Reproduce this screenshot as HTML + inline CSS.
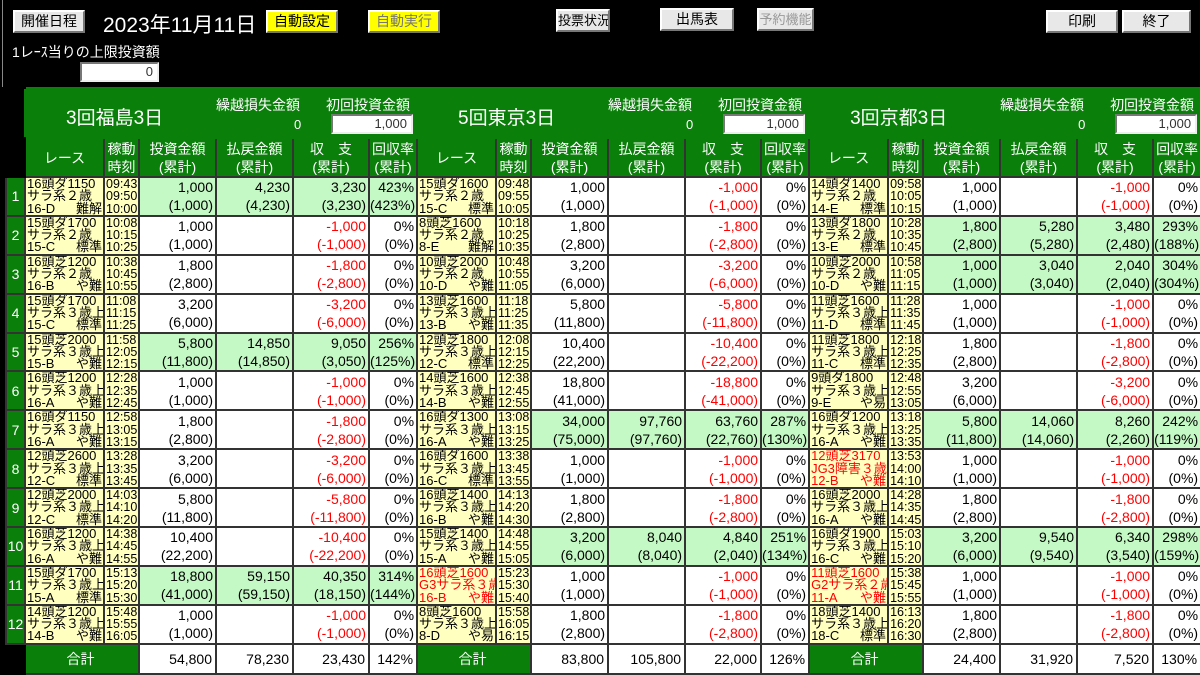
<!DOCTYPE html>
<html><head><meta charset="utf-8"><style>
*{margin:0;padding:0;box-sizing:border-box}
body{width:1200px;height:672px;background:#000;overflow:hidden;position:relative;font-family:"Liberation Sans","Noto Sans CJK JP","IPAGothic",sans-serif;color:#000}
.btn{position:absolute;background:#e8e8e8;border:2px solid;border-color:#fff #777 #777 #fff;font-size:14px;text-align:center;line-height:19px;height:23px;white-space:nowrap;overflow:hidden}
.yb{background:#ffff00}
.lbl{position:absolute;color:#fff}
.inp{position:absolute;background:#fff;border:2px solid;border-color:#777 #eee #eee #777;text-align:right;font-size:13px;padding-right:4px;line-height:16px;color:#333}
table{position:absolute;left:5px;top:87px;border-collapse:collapse;table-layout:fixed;width:1195px}
td{border:2px solid #333;overflow:hidden;white-space:nowrap}
.hd td{background:#0a7f0a;color:#fff;border-color:#0a7f0a;height:50px;position:relative;vertical-align:top;border-right:1px solid #6a6a6a}
.ch td{background:#0a7f0a;color:#fff;height:39px;font-size:14px;line-height:18px;text-align:center;border-color:#333}
.ch td.z,.hd td.z{background:#000;border-color:#000}
td.n{background:#0a7f0a;color:#fff;text-align:center;font-size:14px}
td.r,td.t{background:#ffffc0;font-size:13px;line-height:12.3px;padding:0 1px;vertical-align:middle}
td.t{padding:0 1px;font-size:12.5px}
td.r span{float:right}
.rd{color:#f00}
td.v{background:#fff;text-align:right;font-size:14px;line-height:18px;padding-right:2px;height:38.8px}
td.w{background:#c4f8c4}
td.m{color:#f00}
.tot td{height:30px;font-size:14px;background:#fff;text-align:right;padding-right:3px}
.tot td.z{background:#000;border-color:#000}
.tot td.s{background:#0a7f0a;color:#fff;text-align:center}
.vn{position:absolute;left:40px;top:14px;font-size:19px}
.kl{position:absolute;left:190px;top:6px;font-size:14px}
.k0{position:absolute;left:268px;top:28px;font-size:13px}
.sl{position:absolute;left:300px;top:6px;font-size:14px}
.si{position:absolute;left:305px;top:25px;width:82px;height:20px;background:#fff;border:2px solid;border-color:#777 #eee #eee #777;color:#333;text-align:right;font-size:13px;padding-right:4px;line-height:16px}
</style></head><body>
<div style="position:absolute;left:2px;top:0;width:1px;height:87px;background:#888"></div>
<div class="btn" style="left:13px;top:10px;width:72px">開催日程</div>
<div class="lbl" style="left:103px;top:9px;font-size:21px">2023年11月11日</div>
<div class="btn yb" style="left:266px;top:10px;width:72px">自動設定</div>
<div class="btn yb" style="left:368px;top:10px;width:72px;color:#777">自動実行</div>
<div class="btn" style="left:556px;top:9px;width:54px;font-size:13px">投票状況</div>
<div class="btn" style="left:660px;top:8px;width:74px">出馬表</div>
<div class="btn" style="left:757px;top:8px;width:57px;color:#999;font-size:13px">予約機能</div>
<div class="btn" style="left:1046px;top:10px;width:72px">印刷</div>
<div class="btn" style="left:1122px;top:10px;width:69px">終了</div>
<div class="lbl" style="left:12px;top:42px;font-size:14px">1レｰｽ当りの上限投資額</div>
<div class="inp" style="left:80px;top:62px;width:79px;height:20px">0</div>
<table>
<colgroup><col style="width:19px"><col style="width:79px"><col style="width:35px"><col style="width:77px"><col style="width:77px"><col style="width:76px"><col style="width:48px"><col style="width:79px"><col style="width:35px"><col style="width:77px"><col style="width:77px"><col style="width:76px"><col style="width:48px"><col style="width:79px"><col style="width:35px"><col style="width:77px"><col style="width:77px"><col style="width:76px"><col style="width:48px"></colgroup>
<tr class="hd"><td class="z"></td>
<td colspan="6"><div class="vn">3回福島3日</div><div class="kl">繰越損失金額</div><div class="k0">0</div><div class="sl">初回投資金額</div><div class="si">1,000</div></td>
<td colspan="6"><div class="vn">5回東京3日</div><div class="kl">繰越損失金額</div><div class="k0">0</div><div class="sl">初回投資金額</div><div class="si">1,000</div></td>
<td colspan="6"><div class="vn">3回京都3日</div><div class="kl">繰越損失金額</div><div class="k0">0</div><div class="sl">初回投資金額</div><div class="si">1,000</div></td></tr>
<tr class="ch"><td class="z"></td>
<td>レース</td><td>稼動<br>時刻</td><td>投資金額<br>(累計)</td><td>払戻金額<br>(累計)</td><td>収　支<br>(累計)</td><td>回収率<br>(累計)</td>
<td>レース</td><td>稼動<br>時刻</td><td>投資金額<br>(累計)</td><td>払戻金額<br>(累計)</td><td>収　支<br>(累計)</td><td>回収率<br>(累計)</td>
<td>レース</td><td>稼動<br>時刻</td><td>投資金額<br>(累計)</td><td>払戻金額<br>(累計)</td><td>収　支<br>(累計)</td><td>回収率<br>(累計)</td></tr>

<tr><td class="n">1</td>
<td class="r">16頭ダ1150<br>サラ系２歳<br>16-D<span>難解</span></td><td class="t">09:43<br>09:50<br>10:00</td><td class="v w">1,000<br>(1,000)</td><td class="v w">4,230<br>(4,230)</td><td class="v w">3,230<br>(3,230)</td><td class="v w">423%<br>(423%)</td>
<td class="r">15頭ダ1600<br>サラ系２歳<br>15-C<span>標準</span></td><td class="t">09:48<br>09:55<br>10:05</td><td class="v">1,000<br>(1,000)</td><td class="v"></td><td class="v m">-1,000<br>(-1,000)</td><td class="v">0%<br>(0%)</td>
<td class="r">14頭ダ1400<br>サラ系２歳<br>14-E<span>標準</span></td><td class="t">09:58<br>10:05<br>10:15</td><td class="v">1,000<br>(1,000)</td><td class="v"></td><td class="v m">-1,000<br>(-1,000)</td><td class="v">0%<br>(0%)</td></tr>

<tr><td class="n">2</td>
<td class="r">15頭ダ1700<br>サラ系２歳<br>15-C<span>標準</span></td><td class="t">10:08<br>10:15<br>10:25</td><td class="v">1,000<br>(1,000)</td><td class="v"></td><td class="v m">-1,000<br>(-1,000)</td><td class="v">0%<br>(0%)</td>
<td class="r">8頭芝1600<br>サラ系２歳<br>8-E<span>難解</span></td><td class="t">10:18<br>10:25<br>10:35</td><td class="v">1,800<br>(2,800)</td><td class="v"></td><td class="v m">-1,800<br>(-2,800)</td><td class="v">0%<br>(0%)</td>
<td class="r">13頭ダ1800<br>サラ系２歳<br>13-E<span>標準</span></td><td class="t">10:28<br>10:35<br>10:45</td><td class="v w">1,800<br>(2,800)</td><td class="v w">5,280<br>(5,280)</td><td class="v w">3,480<br>(2,480)</td><td class="v w">293%<br>(188%)</td></tr>

<tr><td class="n">3</td>
<td class="r">16頭芝1200<br>サラ系２歳<br>16-B<span>や難</span></td><td class="t">10:38<br>10:45<br>10:55</td><td class="v">1,800<br>(2,800)</td><td class="v"></td><td class="v m">-1,800<br>(-2,800)</td><td class="v">0%<br>(0%)</td>
<td class="r">10頭芝2000<br>サラ系２歳<br>10-D<span>や難</span></td><td class="t">10:48<br>10:55<br>11:05</td><td class="v">3,200<br>(6,000)</td><td class="v"></td><td class="v m">-3,200<br>(-6,000)</td><td class="v">0%<br>(0%)</td>
<td class="r">10頭芝2000<br>サラ系２歳<br>10-D<span>や難</span></td><td class="t">10:58<br>11:05<br>11:15</td><td class="v w">1,000<br>(1,000)</td><td class="v w">3,040<br>(3,040)</td><td class="v w">2,040<br>(2,040)</td><td class="v w">304%<br>(304%)</td></tr>

<tr><td class="n">4</td>
<td class="r">15頭ダ1700<br>サラ系３歳上<br>15-C<span>標準</span></td><td class="t">11:08<br>11:15<br>11:25</td><td class="v">3,200<br>(6,000)</td><td class="v"></td><td class="v m">-3,200<br>(-6,000)</td><td class="v">0%<br>(0%)</td>
<td class="r">13頭芝1600<br>サラ系３歳上<br>13-B<span>や難</span></td><td class="t">11:18<br>11:25<br>11:35</td><td class="v">5,800<br>(11,800)</td><td class="v"></td><td class="v m">-5,800<br>(-11,800)</td><td class="v">0%<br>(0%)</td>
<td class="r">11頭芝1600<br>サラ系３歳上<br>11-D<span>標準</span></td><td class="t">11:28<br>11:35<br>11:45</td><td class="v">1,000<br>(1,000)</td><td class="v"></td><td class="v m">-1,000<br>(-1,000)</td><td class="v">0%<br>(0%)</td></tr>

<tr><td class="n">5</td>
<td class="r">15頭芝2000<br>サラ系３歳上<br>15-B<span>や難</span></td><td class="t">11:58<br>12:05<br>12:15</td><td class="v w">5,800<br>(11,800)</td><td class="v w">14,850<br>(14,850)</td><td class="v w">9,050<br>(3,050)</td><td class="v w">256%<br>(125%)</td>
<td class="r">12頭芝1800<br>サラ系３歳上<br>12-C<span>標準</span></td><td class="t">12:08<br>12:15<br>12:25</td><td class="v">10,400<br>(22,200)</td><td class="v"></td><td class="v m">-10,400<br>(-22,200)</td><td class="v">0%<br>(0%)</td>
<td class="r">11頭芝1800<br>サラ系３歳上<br>11-C<span>標準</span></td><td class="t">12:18<br>12:25<br>12:35</td><td class="v">1,800<br>(2,800)</td><td class="v"></td><td class="v m">-1,800<br>(-2,800)</td><td class="v">0%<br>(0%)</td></tr>

<tr><td class="n">6</td>
<td class="r">16頭芝1200<br>サラ系３歳上<br>16-A<span>や難</span></td><td class="t">12:28<br>12:35<br>12:45</td><td class="v">1,000<br>(1,000)</td><td class="v"></td><td class="v m">-1,000<br>(-1,000)</td><td class="v">0%<br>(0%)</td>
<td class="r">14頭芝1600<br>サラ系３歳上<br>14-B<span>や難</span></td><td class="t">12:38<br>12:45<br>12:55</td><td class="v">18,800<br>(41,000)</td><td class="v"></td><td class="v m">-18,800<br>(-41,000)</td><td class="v">0%<br>(0%)</td>
<td class="r">9頭ダ1800<br>サラ系３歳上<br>9-E<span>や易</span></td><td class="t">12:48<br>12:55<br>13:05</td><td class="v">3,200<br>(6,000)</td><td class="v"></td><td class="v m">-3,200<br>(-6,000)</td><td class="v">0%<br>(0%)</td></tr>

<tr><td class="n">7</td>
<td class="r">16頭ダ1150<br>サラ系３歳上<br>16-A<span>や難</span></td><td class="t">12:58<br>13:05<br>13:15</td><td class="v">1,800<br>(2,800)</td><td class="v"></td><td class="v m">-1,800<br>(-2,800)</td><td class="v">0%<br>(0%)</td>
<td class="r">16頭ダ1300<br>サラ系３歳上<br>16-A<span>や難</span></td><td class="t">13:08<br>13:15<br>13:25</td><td class="v w">34,000<br>(75,000)</td><td class="v w">97,760<br>(97,760)</td><td class="v w">63,760<br>(22,760)</td><td class="v w">287%<br>(130%)</td>
<td class="r">16頭ダ1200<br>サラ系３歳上<br>16-A<span>や難</span></td><td class="t">13:18<br>13:25<br>13:35</td><td class="v w">5,800<br>(11,800)</td><td class="v w">14,060<br>(14,060)</td><td class="v w">8,260<br>(2,260)</td><td class="v w">242%<br>(119%)</td></tr>

<tr><td class="n">8</td>
<td class="r">12頭芝2600<br>サラ系３歳上<br>12-C<span>標準</span></td><td class="t">13:28<br>13:35<br>13:45</td><td class="v">3,200<br>(6,000)</td><td class="v"></td><td class="v m">-3,200<br>(-6,000)</td><td class="v">0%<br>(0%)</td>
<td class="r">16頭ダ1600<br>サラ系３歳上<br>16-C<span>標準</span></td><td class="t">13:38<br>13:45<br>13:55</td><td class="v">1,000<br>(1,000)</td><td class="v"></td><td class="v m">-1,000<br>(-1,000)</td><td class="v">0%<br>(0%)</td>
<td class="r rd">12頭芝3170<br>JG3障害３歳<br>12-B<span>や難</span></td><td class="t">13:53<br>14:00<br>14:10</td><td class="v">1,000<br>(1,000)</td><td class="v"></td><td class="v m">-1,000<br>(-1,000)</td><td class="v">0%<br>(0%)</td></tr>

<tr><td class="n">9</td>
<td class="r">12頭芝2000<br>サラ系３歳上<br>12-C<span>標準</span></td><td class="t">14:03<br>14:10<br>14:20</td><td class="v">5,800<br>(11,800)</td><td class="v"></td><td class="v m">-5,800<br>(-11,800)</td><td class="v">0%<br>(0%)</td>
<td class="r">16頭芝1400<br>サラ系３歳上<br>16-B<span>や難</span></td><td class="t">14:13<br>14:20<br>14:30</td><td class="v">1,800<br>(2,800)</td><td class="v"></td><td class="v m">-1,800<br>(-2,800)</td><td class="v">0%<br>(0%)</td>
<td class="r">16頭芝2000<br>サラ系３歳上<br>16-A<span>や難</span></td><td class="t">14:28<br>14:35<br>14:45</td><td class="v">1,800<br>(2,800)</td><td class="v"></td><td class="v m">-1,800<br>(-2,800)</td><td class="v">0%<br>(0%)</td></tr>

<tr><td class="n">10</td>
<td class="r">16頭芝1200<br>サラ系３歳上<br>16-A<span>や難</span></td><td class="t">14:38<br>14:45<br>14:55</td><td class="v">10,400<br>(22,200)</td><td class="v"></td><td class="v m">-10,400<br>(-22,200)</td><td class="v">0%<br>(0%)</td>
<td class="r">15頭芝1400<br>サラ系３歳上<br>15-A<span>や難</span></td><td class="t">14:48<br>14:55<br>15:05</td><td class="v w">3,200<br>(6,000)</td><td class="v w">8,040<br>(8,040)</td><td class="v w">4,840<br>(2,040)</td><td class="v w">251%<br>(134%)</td>
<td class="r">16頭ダ1900<br>サラ系３歳上<br>16-C<span>や難</span></td><td class="t">15:03<br>15:10<br>15:20</td><td class="v w">3,200<br>(6,000)</td><td class="v w">9,540<br>(9,540)</td><td class="v w">6,340<br>(3,540)</td><td class="v w">298%<br>(159%)</td></tr>

<tr><td class="n">11</td>
<td class="r">15頭ダ1700<br>サラ系３歳上<br>15-A<span>標準</span></td><td class="t">15:13<br>15:20<br>15:30</td><td class="v w">18,800<br>(41,000)</td><td class="v w">59,150<br>(59,150)</td><td class="v w">40,350<br>(18,150)</td><td class="v w">314%<br>(144%)</td>
<td class="r rd">16頭芝1600<br>G3サラ系３歳<br>16-B<span>や難</span></td><td class="t">15:23<br>15:30<br>15:40</td><td class="v">1,000<br>(1,000)</td><td class="v"></td><td class="v m">-1,000<br>(-1,000)</td><td class="v">0%<br>(0%)</td>
<td class="r rd">11頭芝1600<br>G2サラ系２歳<br>11-A<span>や難</span></td><td class="t">15:38<br>15:45<br>15:55</td><td class="v">1,000<br>(1,000)</td><td class="v"></td><td class="v m">-1,000<br>(-1,000)</td><td class="v">0%<br>(0%)</td></tr>

<tr><td class="n">12</td>
<td class="r">14頭芝1200<br>サラ系３歳上<br>14-B<span>や難</span></td><td class="t">15:48<br>15:55<br>16:05</td><td class="v">1,000<br>(1,000)</td><td class="v"></td><td class="v m">-1,000<br>(-1,000)</td><td class="v">0%<br>(0%)</td>
<td class="r">8頭芝1600<br>サラ系３歳上<br>8-D<span>や易</span></td><td class="t">15:58<br>16:05<br>16:15</td><td class="v">1,800<br>(2,800)</td><td class="v"></td><td class="v m">-1,800<br>(-2,800)</td><td class="v">0%<br>(0%)</td>
<td class="r">18頭芝1400<br>サラ系３歳上<br>18-C<span>標準</span></td><td class="t">16:13<br>16:20<br>16:30</td><td class="v">1,800<br>(2,800)</td><td class="v"></td><td class="v m">-1,800<br>(-2,800)</td><td class="v">0%<br>(0%)</td></tr>

<tr class="tot"><td class="z"></td>
<td colspan="2" class="s">合計</td><td>54,800</td><td>78,230</td><td>23,430</td><td>142%</td>
<td colspan="2" class="s">合計</td><td>83,800</td><td>105,800</td><td>22,000</td><td>126%</td>
<td colspan="2" class="s">合計</td><td>24,400</td><td>31,920</td><td>7,520</td><td>130%</td></tr>
</table>
</body></html>
